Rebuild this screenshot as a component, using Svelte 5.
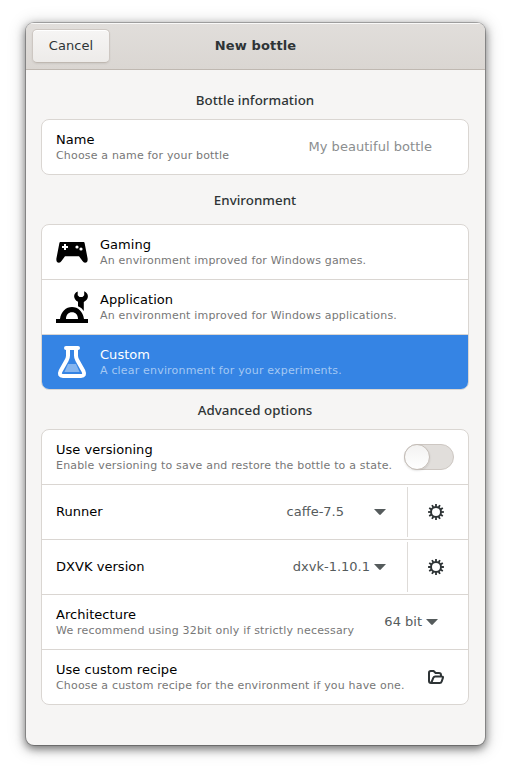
<script>
  const environments = [
    { id: 'gaming', title: 'Gaming', text: 'An environment improved for Windows games.' },
    { id: 'application', title: 'Application', text: 'An environment improved for Windows applications.' },
    { id: 'custom', title: 'Custom', text: 'A clear environment for your experiments.' }
  ];
  const components = [
    { title: 'Runner', value: 'caffe-7.5', wide: true },
    { title: 'DXVK version', value: 'dxvk-1.10.1', wide: false }
  ];
  const teeth = [0, 30, 60, 90, 120, 150, 180, 210, 240, 270, 300, 330];
  let selected = $state('custom');
  let versioning = $state(false);
</script>

{#snippet label(title, text)}
  <div class="label">
    <div class="title">{title}</div>
    {#if text}<div class="sub">{text}</div>{/if}
  </div>
{/snippet}

{#snippet arrow()}
  <svg class="arrow" width="12" height="6" viewBox="0 0 12 6"><path d="M0 0H12L6.8 5.6Q6 6.3 5.2 5.6Z" fill="currentColor" /></svg>
{/snippet}

<div class="window">
  <header>
    <button class="cancel">Cancel</button>
    <h1>New bottle</h1>
  </header>
  <main>
    <h2>Bottle information</h2>
    <section class="card">
      <div class="row">
        {@render label('Name', 'Choose a name for your bottle')}
        <span class="entry">My beautiful bottle</span>
      </div>
    </section>

    <h2 class="env">Environment</h2>
    <section class="card">
      {#each environments as env}
        <button class="row choice" class:selected={selected === env.id} onclick={() => (selected = env.id)}>
          <svg class="icon" width="32" height="32" viewBox="0 0 32 32">
            {#if env.id === 'gaming'}
              <path fill="#000" fill-rule="evenodd" d="M4.4 6H27.6Q28.4 6 28.6 7L31.6 22.5Q32 26.7 29 26.7Q27.6 26.7 26.5 25L23 20.3H9L5.5 25Q4.4 26.7 3 26.7Q0 26.7 .4 22.5L3.4 7Q3.6 6 4.4 6ZM8 8V10H6V12H8V14H10V12H12V10H10V8Z" />
              <circle cx="21" cy="11" r="1.6" fill="#fff" /><circle cx="25" cy="13" r="1.6" fill="#fff" />
            {:else if env.id === 'application'}
              <path d="M0 32V28H4C5 20.5 10 16 16 16S27 20.5 28 28H32V32ZM10 28H22C22 23.8 19.5 21.2 16 21.2S10 23.8 10 28Z" fill="#000" fill-rule="evenodd" />
              <path d="M21.7 0.4C17 2 16.8 8.5 22 10.8V15.2C24.8 16.3 26.6 18 27.8 20.1V11C33.2 8.5 33.2 2.2 28.2 0.2V4.3L26.5 6H23.5L21.7 4.3Z" fill="#000" />
            {:else}
              <path d="M12 18H20L23.6 26H8.4Z" fill="#fff" opacity=".4" />
              <path d="M10 2H22M12 2.5V9.5Q12 12 10.8 14L4.6 25Q2.4 30 7 30H25Q29.6 30 27.4 25L21.2 14Q20 12 20 9.5V2.5" fill="none" stroke="#fff" stroke-width="4" stroke-linecap="round" stroke-linejoin="round" />
            {/if}
          </svg>
          {@render label(env.title, env.text)}
        </button>
      {/each}
    </section>

    <h2 class="adv">Advanced options</h2>
    <section class="card">
      <div class="row">
        {@render label('Use versioning', 'Enable versioning to save and restore the bottle to a state.')}
        <button class="switch" class:on={versioning} aria-label="Use versioning" onclick={() => (versioning = !versioning)}><span></span></button>
      </div>
      {#each components as item}
        <div class="row">
          {@render label(item.title)}
          <div class="combo" class:wide={item.wide}><span>{item.value}</span>{@render arrow()}</div>
          <div class="action">
            <svg width="16" height="16" viewBox="0 0 16 16">
              <circle cx="8" cy="8" r="5" fill="none" stroke="#2e3436" stroke-width="2" />
              {#each teeth as angle}
                <path d="M7.1 0.1H8.9V2.8H7.1Z" fill="#2e3436" transform="rotate({angle} 8 8)" />
              {/each}
            </svg>
          </div>
        </div>
      {/each}
      <div class="row">
        {@render label('Architecture', 'We recommend using 32bit only if strictly necessary')}
        <div class="combo arch"><span>64 bit</span>{@render arrow()}</div>
      </div>
      <div class="row">
        {@render label('Use custom recipe', 'Choose a custom recipe for the environment if you have one.')}
        <svg class="folder" width="16" height="16" viewBox="0 0 16 16">
          <path d="M3 14Q1 14 1 12V3.8Q1 2 2.8 2H5.6L7.6 4H11Q13 4 13 6V7M3.2 14L5.4 8.7Q5.9 7.5 7.2 7.5H14Q15.3 7.5 14.9 8.9L13.7 12.5Q13.2 14 11.7 14Z" fill="none" stroke="#2e3436" stroke-width="2" stroke-linejoin="round" />
        </svg>
      </div>
    </section>
  </main>
</div>

<style>
  :global(body) {
    background: #fff;
  }
  :global(#app) {
    display: flow-root;
  }
  .window {
    box-sizing: border-box;
    width: 459px;
    height: 722px;
    margin: 23px 0 29px 26px;
    border-radius: 8px;
    overflow: hidden;
    background: #f6f5f4;
    color: #2e3436;
    font: 13px/16px 'DejaVu Sans', sans-serif;
    letter-spacing: 0.04px;
    box-shadow: 0 3px 9px 1px rgba(0, 0, 0, 0.5), 0 2px 16px 5px rgba(0, 0, 0, 0.1), 0 0 0 1px rgba(0, 0, 0, 0.23);
  }
  button {
    font: inherit;
    color: inherit;
    letter-spacing: inherit;
  }
  header {
    box-sizing: border-box;
    height: 47px;
    display: grid;
    grid-template-columns: 1fr auto 1fr;
    align-items: center;
    padding: 0 6px;
    background: linear-gradient(to top, #dad6d2, #e1dedb);
    border-bottom: 1px solid #bfb8b1;
    box-shadow: inset 0 1px rgba(255, 255, 255, 0.8);
  }
  .cancel {
    box-sizing: border-box;
    justify-self: start;
    width: 78px;
    height: 34px;
    padding: 0;
    border: 1px solid #cdc7c2;
    border-bottom-color: #bfb8b1;
    border-radius: 5px;
    background: linear-gradient(to top, #edebe9, #f6f5f4);
    box-shadow: inset 0 1px #fff, 0 1px 2px rgba(0, 0, 0, 0.07);
  }
  h1 {
    margin: 0;
    font-size: 13px;
    font-weight: bold;
    letter-spacing: 0.15px;
  }
  main {
    padding: 20px 16px 0 15px;
  }
  h2 {
    margin: 0 0 9px;
    height: 20px;
    text-align: center;
    font: 500 13.33px/20px 'Noto Sans', sans-serif;
  }
  .env {
    margin: 15px 0 14px;
  }
  .adv {
    margin: 10px 0 9px;
  }
  .card {
    border: 1px solid #dad6d2;
    border-radius: 8px;
    background: #fff;
    overflow: hidden;
  }
  .row {
    box-sizing: border-box;
    width: 100%;
    height: 55px;
    display: flex;
    align-items: center;
    padding: 0 14px;
    border: 0;
    border-bottom: 1px solid #dad6d2;
    background: none;
    text-align: left;
  }
  .row:last-child {
    height: 54px;
    border-bottom: 0;
  }
  .label {
    flex: 1;
    white-space: nowrap;
  }
  .title {
    color: #000;
  }
  .sub {
    font-size: 11px;
    line-height: 15px;
    letter-spacing: 0.18px;
    color: #777;
  }
  .entry {
    margin-right: 22px;
    color: #8b8e8f;
  }
  .icon {
    margin-right: 12px;
    flex: none;
  }
  .selected {
    background: #3584e4;
  }
  .selected .title {
    color: #fff;
  }
  .selected .sub {
    color: #a4c8f3;
  }
  .switch {
    box-sizing: border-box;
    width: 50px;
    height: 26px;
    padding: 0;
    border: 1px solid #cdc7c2;
    border-radius: 13px;
    background: #e1dedb;
    display: flex;
    align-items: center;
  }
  .switch.on {
    justify-content: flex-end;
    background: #3584e4;
  }
  .switch span {
    box-sizing: border-box;
    width: 26px;
    height: 26px;
    margin: -1px;
    border: 1px solid #c4bdb7;
    border-radius: 50%;
    background: linear-gradient(to top, #fff, #f3f2f1);
    box-shadow: 0 1px 2px rgba(0, 0, 0, 0.1);
  }
  .combo {
    display: flex;
    align-items: center;
    gap: 4px;
    color: #555b5c;
    letter-spacing: 0;
  }
  .combo.wide {
    gap: 30px;
  }
  .arch {
    margin-right: 16px;
  }
  .action {
    margin-left: 21px;
    height: 50px;
    padding: 0 10px 0 20px;
    border-left: 1px solid #dedbd8;
    display: flex;
    align-items: center;
  }
  .folder {
    margin-right: 10px;
  }
</style>
